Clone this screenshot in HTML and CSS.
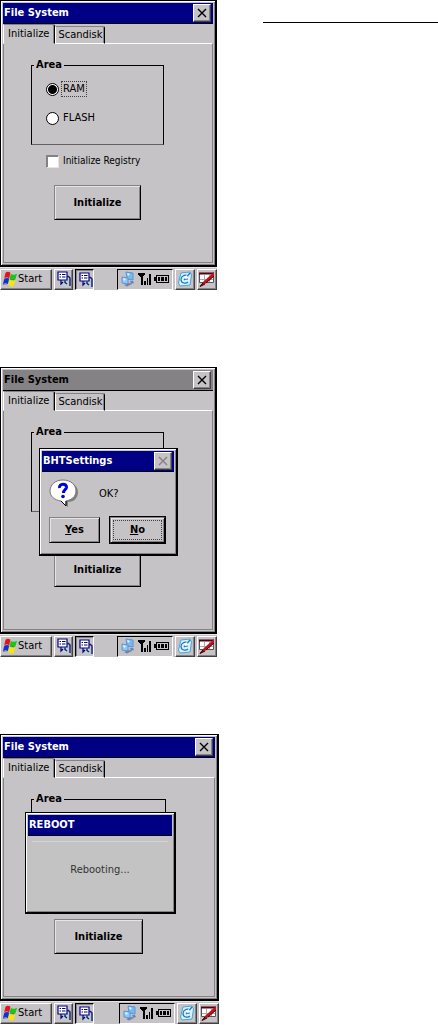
FILE: index.html
```
<!DOCTYPE html>
<html lang="en">
<head>
<meta charset="utf-8">
<title>File System</title>
<link rel="stylesheet" href="styles.css">
</head>
<body>
<svg class="defs" aria-hidden="true">
  <symbol id="i-close" viewBox="0 0 10 10"><path d="M1 1L9 9M9 1L1 9" fill="none" stroke="currentColor" stroke-width="1.4"/></symbol>
  <symbol id="i-flag" viewBox="0 0 16 18">
    <path d="M3 2C5 0 7 1 8.500 2L7 8.500C5 6.500 3.500 7 1.500 8Z" fill="#e8101c"/>
    <path d="M9 3C11 5 13 4 16 3L14 9.500C12 10.500 10 10 7.500 8.500Z" fill="#18c818"/>
    <path d="M1.500 9C4 7 6 8 7 9L5.500 15C4 13 2 14 0 15Z" fill="#1030e0"/>
    <path d="M7.500 9.500C10 11.500 12 11 14 10L12 16.500C10 18 8 17 6 15.500Z" fill="#f8e800"/>
    <path d="M2 8H7M0 15L5 14.500M8 9.500L13 10" stroke="#555" stroke-width=".7" fill="none"/>
  </symbol>
  <symbol id="i-doc" viewBox="0 0 16 16">
    <path d="M6 10H12V15H7Z" fill="#b6d2d2"/>
    <path d="M2 1H11V9H2Z" fill="#fff" stroke="#000080" stroke-width="1.200"/>
    <path d="M3.500 3.500H5M6 3.500H9.500M3.500 6H5M6 6H9.500" stroke="#000080" fill="none"/>
    <path d="M5 9V13L7 11" stroke="#000080" stroke-width="1.200" fill="none"/>
    <path d="M11 5.500H12.500L14 7V15M9 9.500V11.500L11 13" stroke="#102070" stroke-width="1.400" fill="none"/>
  </symbol>
  <symbol id="i-net" viewBox="0 0 14 16">
    <path d="M5 1L12 2V9L6 8Z" fill="#74b9f2" stroke="#5c94d4"/>
    <path d="M6 2L9 3L7 5Z" fill="#e6f7ff"/>
    <path d="M1 6L7 7V13L1 12Z" fill="#8ecaf5" stroke="#5c94d4"/>
    <path d="M2 7L5 8L3 10Z" fill="#e6f7ff"/>
    <path d="M3 14L8 12L11 13L6 15.500ZM9 10L12 10L13 12L10 13Z" fill="#6b84b0"/>
  </symbol>
  <symbol id="i-signal" viewBox="0 0 13 12" shape-rendering="crispEdges">
    <path d="M0 0H7V2H6V3H5V12H3V4H2V3H1V2H0ZM6 8H8V12H6ZM9 5H10V12H9ZM11 1H13V12H11Z" fill="#000"/>
  </symbol>
  <symbol id="i-battery" viewBox="0 0 15 8" shape-rendering="crispEdges">
    <path d="M2 0H15V8H2V6H0V2H2ZM3 1V7H14V1Z" fill="#000" fill-rule="evenodd"/>
    <path d="M4 2H6V6H4ZM7 2H10V6H7ZM11 2H13V6H11Z" fill="#000"/>
  </symbol>
  <symbol id="i-sync" viewBox="0 0 16 16">
    <path d="M4 2L13 1L14.500 4L13 14L3 15L1.500 12Z" fill="#d9f1fb" stroke="#4aa4d8"/>
    <path d="M11 5C8 3 4 5 4 8.500C4 12.500 9 13 11 11M7 9L13 2M7 8.500L11 8" stroke="#1878c0" stroke-width="1.200" fill="none"/>
    <path d="M7 6L10 4L11 7L8 8Z" fill="#fff"/>
  </symbol>
  <symbol id="i-pen" viewBox="0 0 16 16">
    <path d="M.5 2.500H14.500V11.500H.5Z" fill="#fff" stroke="#555"/>
    <path d="M0 2.500H15" stroke="#500010" stroke-width="2"/>
    <path d="M1 8.500H14M5.500 4V11M10.500 4V11" stroke="#aaa"/>
    <path d="M15 1V5L6 13L1 15.500L4 11Z" fill="#c8101c"/>
    <path d="M6 13L1 15.500L4 12M15 5L7 12" stroke="#300" fill="none"/>
  </symbol>
  <symbol id="i-ask" viewBox="0 0 30 29">
    <path d="M16 3C25 3 29 8 29 13C29 19 25 23 19 23V28L14 23Z" fill="#808080"/>
    <path d="M14 1C22 1 27 6 27 12C27 18 22 21 17 22V27L12 22C5 21 1 17 1 12C1 6 6 1 14 1Z" fill="#fff" stroke="#777"/>
    <path d="M17 22V27L12 22" fill="none" stroke="#000"/>
    <path d="M10.500 9C10 4 18 4 17.500 8.500C17 11 14.500 10.500 14.500 14" fill="none" stroke="#0000e8" stroke-width="3"/>
    <circle cx="14" cy="17.500" r="1.800" fill="#0000e8"/>
  </symbol>
</svg>

<main class="page">
  <div class="screens">

    <section class="screen">
      <div class="window">
        <header class="titlebar"><h2>File System</h2><button class="close" aria-label="Close"><svg><use href="#i-close"/></svg></button></header>
        <div class="tabs" role="tablist"><button class="tab active" role="tab" aria-selected="true">Initialize</button><button class="tab" role="tab" aria-selected="false">Scandisk</button></div>
        <div class="panel">
          <fieldset class="group">
            <legend>Area</legend>
            <label class="choice"><input type="radio" name="area" checked><span class="focused">RAM</span></label>
            <label class="choice"><input type="radio" name="area"><span>FLASH</span></label>
          </fieldset>
          <label class="choice registry"><input type="checkbox"><span>Initialize Registry</span></label>
          <button class="push main-action">Initialize</button>
        </div>
      </div>
      <footer class="taskbar">
        <button class="task start"><svg><use href="#i-flag"/></svg>Start</button>
        <button class="task app" aria-label="Settings"><svg><use href="#i-doc"/></svg></button>
        <button class="task app pressed" aria-label="File System"><svg><use href="#i-doc"/></svg></button>
        <div class="tray"><svg class="net"><use href="#i-net"/></svg><svg class="signal"><use href="#i-signal"/></svg><svg class="battery"><use href="#i-battery"/></svg></div>
        <button class="task" aria-label="Desktop"><svg><use href="#i-sync"/></svg></button>
        <button class="task" aria-label="Input panel"><svg><use href="#i-pen"/></svg></button>
      </footer>
    </section>

    <section class="screen">
      <div class="window">
        <header class="titlebar inactive"><h2>File System</h2><button class="close" aria-label="Close"><svg><use href="#i-close"/></svg></button></header>
        <div class="tabs" role="tablist"><button class="tab active" role="tab" aria-selected="true">Initialize</button><button class="tab" role="tab" aria-selected="false">Scandisk</button></div>
        <div class="panel">
          <fieldset class="group covered"><legend>Area</legend></fieldset>
          <button class="push main-action">Initialize</button>
        </div>
      </div>
      <div class="dialog confirm" role="dialog" aria-label="BHTSettings">
        <header class="titlebar"><h2>BHTSettings</h2><button class="close" aria-label="Close" disabled><svg><use href="#i-close"/></svg></button></header>
        <div class="message"><svg><use href="#i-ask"/></svg><p>OK?</p></div>
        <div class="answers"><button class="push"><u>Y</u>es</button><button class="push default"><span><u>N</u>o</span></button></div>
      </div>
      <footer class="taskbar">
        <button class="task start"><svg><use href="#i-flag"/></svg>Start</button>
        <button class="task app" aria-label="Settings"><svg><use href="#i-doc"/></svg></button>
        <button class="task app pressed" aria-label="File System"><svg><use href="#i-doc"/></svg></button>
        <div class="tray"><svg class="net"><use href="#i-net"/></svg><svg class="signal"><use href="#i-signal"/></svg><svg class="battery"><use href="#i-battery"/></svg></div>
        <button class="task" aria-label="Desktop"><svg><use href="#i-sync"/></svg></button>
        <button class="task" aria-label="Input panel"><svg><use href="#i-pen"/></svg></button>
      </footer>
    </section>

    <section class="screen wide">
      <div class="window">
        <header class="titlebar"><h2>File System</h2><button class="close" aria-label="Close"><svg><use href="#i-close"/></svg></button></header>
        <div class="tabs" role="tablist"><button class="tab active" role="tab" aria-selected="true">Initialize</button><button class="tab" role="tab" aria-selected="false">Scandisk</button></div>
        <div class="panel">
          <fieldset class="group covered"><legend>Area</legend></fieldset>
          <button class="push main-action">Initialize</button>
        </div>
      </div>
      <div class="dialog reboot" role="dialog" aria-label="REBOOT">
        <header class="titlebar"><h2>REBOOT</h2></header>
        <p>Rebooting...</p>
      </div>
      <footer class="taskbar">
        <button class="task start"><svg><use href="#i-flag"/></svg>Start</button>
        <button class="task app" aria-label="Settings"><svg><use href="#i-doc"/></svg></button>
        <button class="task app pressed" aria-label="File System"><svg><use href="#i-doc"/></svg></button>
        <div class="tray"><svg class="net"><use href="#i-net"/></svg><svg class="signal"><use href="#i-signal"/></svg><svg class="battery"><use href="#i-battery"/></svg></div>
        <button class="task" aria-label="Desktop"><svg><use href="#i-sync"/></svg></button>
        <button class="task" aria-label="Input panel"><svg><use href="#i-pen"/></svg></button>
      </footer>
    </section>

  </div>
  <hr class="rule">
</main>
</body>
</html>
```
FILE: styles.css
```
* { box-sizing: border-box; }

body {
  margin: 0;
  background: #fff;
  color: #000;
  font: 11px/14px "DejaVu Sans Condensed", "Open Sans", "DejaVu Sans", sans-serif;
}

button {
  margin: 0;
  padding: 0;
  border: 0;
  border-radius: 0;
  background: #c6c3c6;
  color: inherit;
  font: inherit;
}

h2, p { margin: 0; font-size: inherit; }
svg { display: block; }
.defs { position: absolute; width: 0; height: 0; }

.page {
  display: grid;
  grid-template-columns: 50% 1fr;
  column-gap: 44px;
  align-items: start;
}

.rule {
  width: 100%;
  height: 1px;
  margin: 22px 0 0;
  border: 0;
  background: #000;
}

.screens { display: grid; gap: 77px; }
.screen { position: relative; margin-right: 2px; }
.screen.wide { margin-right: 0; }

.window {
  border: 1px solid #000;
  border-right-width: 2px;
  border-bottom-width: 2px;
  box-shadow: inset 1px 1px #fff, inset -1px -1px #848284;
  padding: 2px;
  background: #c6c3c6;
}

.titlebar {
  display: flex;
  align-items: center;
  justify-content: space-between;
  height: 21px;
  padding: 0 2px 0 1px;
  border-bottom: 1px solid #000;
  background: #000084;
  color: #fff;
}
.titlebar.inactive { background: #848284; color: #000; }

.close {
  display: grid;
  place-items: center;
  width: 18px;
  height: 18px;
  border: 1px solid;
  border-color: #fff #424142 #424142 #fff;
  box-shadow: inset -1px -1px #848284;
  color: #000;
}
.close svg { width: 10px; height: 10px; }
.close:disabled { color: #848284; }

.tabs { display: flex; align-items: flex-end; height: 20px; position: relative; }
.tab {
  height: 18px;
  padding: 0 2px;
  border: 1px solid;
  border-color: #848284 #000 #fff #fff;
  box-shadow: inset -1px 0 #848284;
  border-radius: 2px 2px 0 0;
}
.tab.active {
  height: 20px;
  padding: 0 5px 0 4px;
  border-bottom-color: #c6c3c6;
}

.panel {
  display: flex;
  flex-direction: column;
  border: 1px solid;
  border-color: #fff #848284 #848284 #848284;
  margin-top: -1px;
  padding: 14px 48px 42px 27px;
}

.group {
  min-width: 0;
  height: 87px;
  margin: 0;
  padding: 10px 14px 6px;
  border: 1px solid #000;
  border-bottom-color: #636163;
}
.group legend { margin-left: -12px; padding: 0 2px; font-weight: bold; }
.group.covered { margin-bottom: 40px; }
.group .choice + .choice { margin-top: 15px; }

.choice {
  display: flex;
  align-items: center;
  gap: 3px;
  height: 14px;
}
.choice span { padding: 0 1px; white-space: nowrap; }
.choice .focused { outline: 1px dotted #424142; }
.choice input {
  appearance: none;
  flex: none;
  width: 13px;
  height: 13px;
  margin: 0;
  border: 1px solid #000;
  background: #fff;
}
.choice input[type="radio"] { border-radius: 50%; }
.choice input[type="radio"]:checked {
  background: radial-gradient(circle, #000 4px, #fff 5px);
}
.choice input[type="checkbox"] {
  border-color: #848284 #e7e3e7 #e7e3e7 #848284;
  box-shadow: inset 1px 1px #848284;
}
.registry { margin: 9px 0 17px 15px; font-size: 10px; }

.push {
  height: 35px;
  border: 1px solid;
  border-color: #848284 #000 #000 #848284;
  box-shadow: inset 1px 1px #e7e3e7, inset -1px -1px #848284;
  font-weight: bold;
}
.main-action { margin: 0 23px; }

.taskbar {
  display: flex;
  align-items: center;
  gap: 2px;
  height: 23px;
  background: #c6c3c6;
  border-top: 1px solid #e7e3e7;
}
.task {
  display: flex;
  align-items: center;
  justify-content: center;
  width: 20px;
  height: 21px;
  border: 1px solid;
  border-color: #fff #424142 #424142 #fff;
  box-shadow: inset -1px -1px #848284;
}
.task svg { flex: none; width: 16px; height: 16px; }
.start { width: 52px; justify-content: flex-start; padding-left: 1px; }
.app { width: 19px; }
.pressed {
  border-color: #000 #fff #fff #000;
  box-shadow: inset 1px 1px #848284;
  padding: 2px 0 0 2px;
}
.tray {
  display: flex;
  align-items: center;
  gap: 3px;
  height: 21px;
  margin-left: auto;
  padding: 0 3px;
  border: 1px solid;
  border-color: #000 #fff #fff #000;
}
.net { width: 14px; height: 16px; }
.signal { width: 13px; height: 12px; }
.battery { width: 15px; height: 8px; }

.dialog {
  position: absolute;
  border: 1px solid #000;
  border-right-width: 2px;
  border-bottom-width: 2px;
  box-shadow: inset 1px 1px #fff, inset -1px -1px #848284;
  padding: 2px;
  background: #c6c3c6;
}
.confirm { top: 81px; left: 39px; width: 139px; }
.message { display: flex; align-items: center; gap: 20px; padding: 7px 7px 9px; }
.message svg { width: 30px; height: 29px; }
.answers { display: flex; gap: 10px; padding: 0 9px 9px 7px; }
.answers .push { flex: 1 1 0; width: 0; height: 26px; }
.answers .default {
  padding: 2px;
  outline: 1px solid #000;
}
.default span { display: block; height: 100%; border: 1px dotted #424142; line-height: 18px; }

.reboot { top: 78px; left: 25px; width: 151px; background: #c3c3c3; }
.reboot p {
  margin: 5px 4px;
  padding: 21px 0 28px;
  border-top: 1px solid #d4d4d4;
  color: #333;
  text-align: center;
}
```
